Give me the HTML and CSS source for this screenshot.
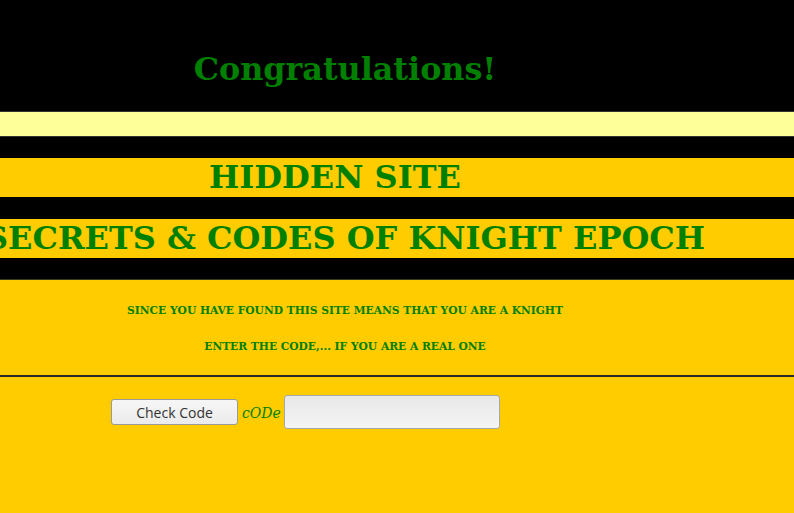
FILE: index.html
```html
<!DOCTYPE html>
<html>
<head>
<meta charset="utf-8">
<link rel="stylesheet" href="styles.css">
</head>
<body>
<div class="top">
  <h1 class="congrats">Congratulations!</h1>
</div>
<div class="pale"></div>
<div class="gap"></div>
<div class="band"><h2 class="band-title">HIDDEN SITE</h2></div>
<div class="gap mid"></div>
<div class="band"><h2 class="band-title wide">SECRETS &amp; CODES OF KNIGHT EPOCH</h2></div>
<div class="gap last"></div>
<div class="main">
  <p class="msg first">SINCE YOU HAVE FOUND THIS SITE MEANS THAT YOU ARE A KNIGHT</p>
  <p class="msg second">ENTER THE CODE,... IF YOU ARE A REAL ONE</p>
  <div class="divider"></div>
  <form class="codeform" onsubmit="return false">
    <button type="button" class="btn">Check Code</button>
    <span class="label">cODe</span>
    <input type="text" class="field">
  </form>
</div>
</body>
</html>
```
FILE: styles.css
```css
html, body {
  margin: 0;
  padding: 0;
}
body {
  background: #000;
  font-family: "DejaVu Serif", serif;
  height: 513px;
  overflow: hidden;
}
.top {
  height: 111px;
  width: 690px;
  display: flex;
  justify-content: center;
}
.congrats {
  margin: 49px 0 0;
  font-size: 31.8px;
  line-height: 40px;
  color: #008000;
  font-weight: bold;
}
.pale {
  height: 24px;
  background: #ffff99;
  border-top: 1px solid #333;
  border-bottom: 1px solid #333;
}
.gap {
  height: 21px;
}
.gap.mid {
  height: 22px;
}
.gap.last {
  height: 21px;
  border-bottom: 1px solid #3a3a1a;
}
.band {
  background: #ffcc00;
  height: 39px;
  width: 100%;
  overflow: hidden;
}
.band-title {
  margin: 0;
  width: 690px;
  text-align: center;
  font-size: 32px;
  line-height: 39px;
  font-weight: bold;
  color: #008000;
  white-space: nowrap;
  padding-right: 20px;
  box-sizing: border-box;
}
.band-title.wide {
  padding-right: 0;
  display: flex;
  justify-content: center;
}
.main {
  background: #ffcc00;
  height: 233px;
  box-sizing: border-box;
  padding-top: 24px;
}
.msg {
  width: 690px;
  margin: 0;
  text-align: center;
  font-size: 10.7px;
  font-weight: bold;
  color: #008000;
  line-height: 14px;
}
.msg.second {
  margin-top: 22px;
}
.divider {
  margin-top: 21px;
  height: 2px;
  background: #2a2a2a;
}
.codeform {
  display: flex;
  align-items: center;
  margin: 18px 0 0 111px;
  height: 34px;
}
.btn {
  width: 127px;
  height: 26px;
  margin: 0;
  padding: 0;
  border: 1px solid #9a9a9a;
  border-radius: 3px;
  background: linear-gradient(#f6f6f6, #ebebeb);
  font-family: "Open Sans", sans-serif;
  font-size: 14px;
  color: #333;
}
.label {
  margin: 1px 3px 0 4px;
  font-style: italic;
  font-size: 14px;
  color: #008000;
}
.field {
  width: 216px;
  height: 34px;
  box-sizing: border-box;
  border: 1px solid #a8a8a8;
  border-radius: 3px;
  background: linear-gradient(#e8e8e8, #f4f4f4);
  margin: 0;
  padding: 0 4px;
}
```
